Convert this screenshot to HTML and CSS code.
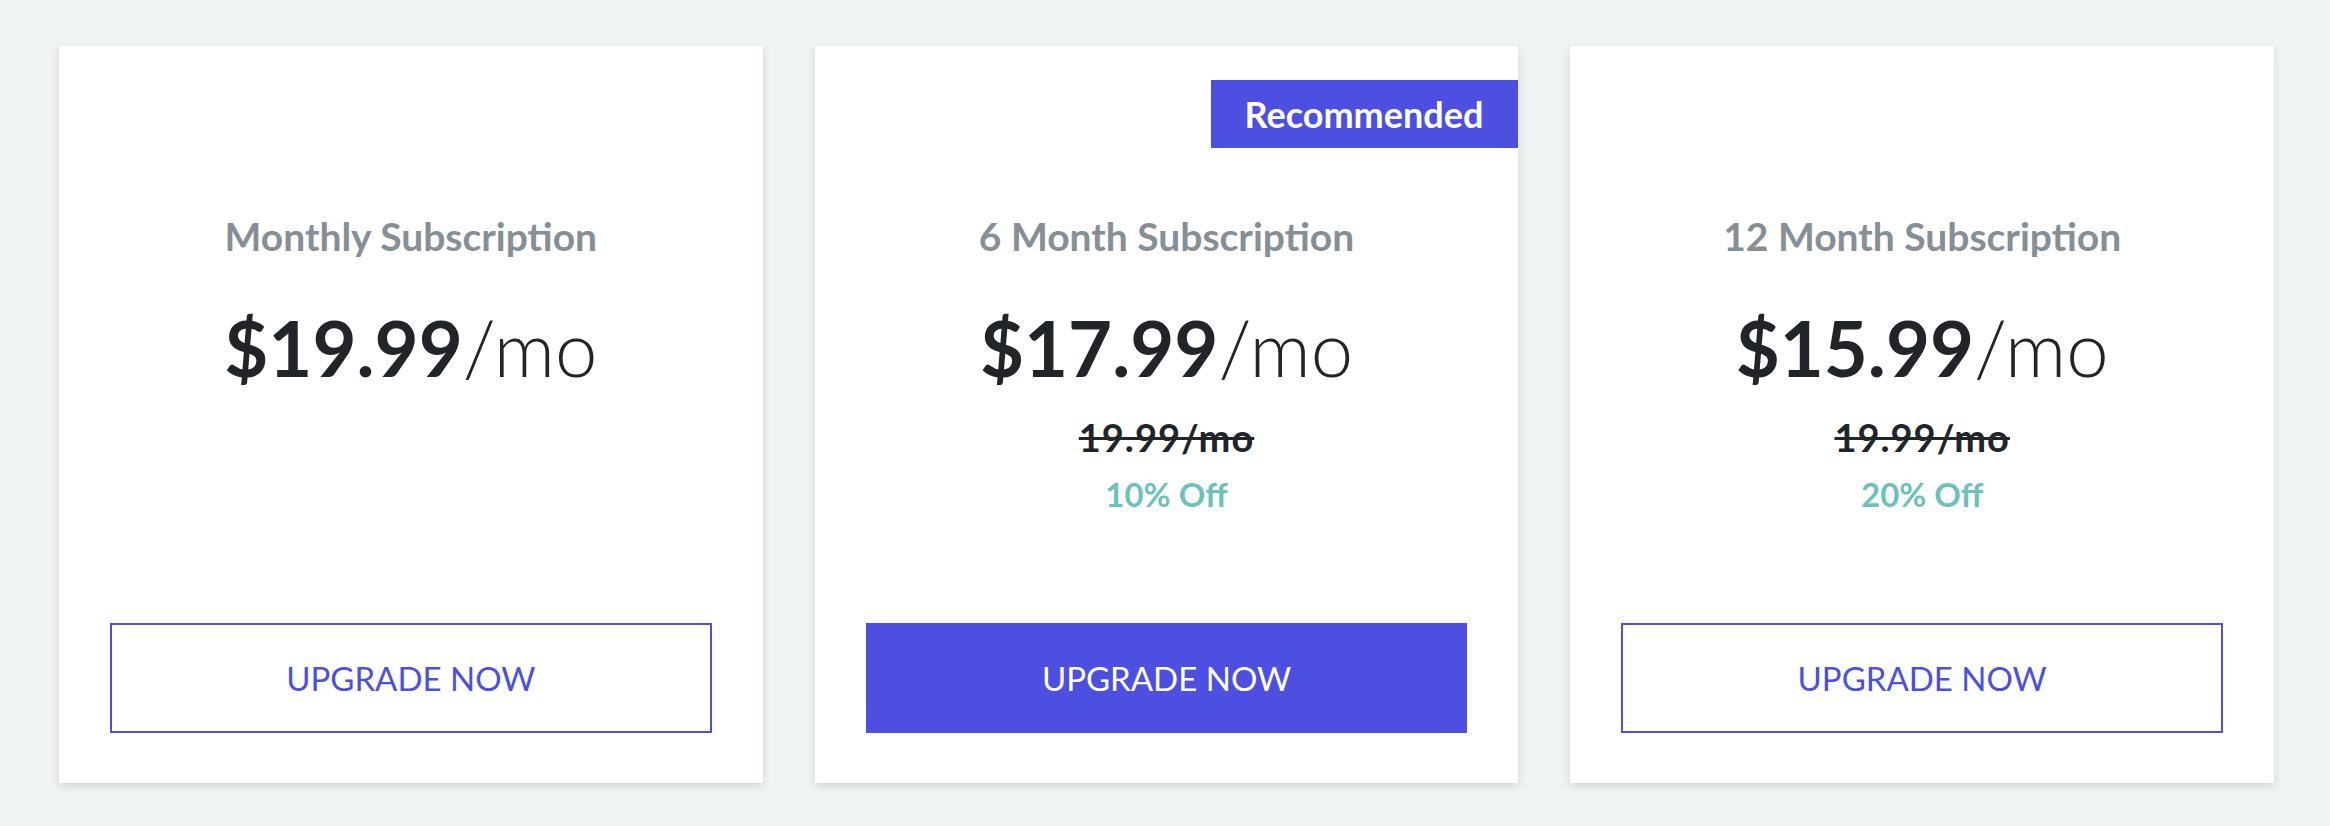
FILE: index.html
```html
<!DOCTYPE html>
<html lang="en">
<head>
    <meta charset="UTF-8">
    <meta name="viewport" content="width=device-width, initial-scale=1.0">
    <title>Upgrade</title>
    <link rel="stylesheet" href="styles.css">
</head>
<body>
    <div class="plans">
        <div class="plan">
            <h2 class="plan-title">Monthly Subscription</h2>
            <div class="plan-price"><strong>$19.99</strong>/mo</div>
            <button class="plan-btn">UPGRADE NOW</button>
        </div>

        <div class="plan">
            <span class="badge">Recommended</span>
            <h2 class="plan-title">6 Month Subscription</h2>
            <div class="plan-price"><strong>$17.99</strong>/mo</div>
            <div class="plan-old">19.99/mo</div>
            <div class="plan-off">10% Off</div>
            <button class="plan-btn plan-btn-solid">UPGRADE NOW</button>
        </div>

        <div class="plan">
            <h2 class="plan-title">12 Month Subscription</h2>
            <div class="plan-price"><strong>$15.99</strong>/mo</div>
            <div class="plan-old">19.99/mo</div>
            <div class="plan-off">20% Off</div>
            <button class="plan-btn">UPGRADE NOW</button>
        </div>
    </div>
</body>
</html>
```

FILE: styles.css
```css
body {
    margin: 0;
    background-color: #eff3f4;
    font-family: Lato, "Open Sans", sans-serif;
    color: #212529;
}
.plans {
    display: flex;
    gap: 52px;
    padding: 46px 56px 43px 59px;
}
.plan {
    position: relative;
    flex: 1;
    height: 737px;
    box-sizing: border-box;
    padding: 50px 51px;
    display: flex;
    flex-direction: column;
    text-align: center;
    background-color: #fff;
    box-shadow: 0 3px 8px rgba(0, 0, 0, 0.12);
}
.plan-title {
    margin: 117px 0 0;
    font-size: 39px;
    line-height: 1.2;
    font-weight: 700;
    color: #868e96;
}
.plan-price {
    margin-top: 42px;
    font-size: 76px;
    line-height: 1.2;
    font-weight: 300;
}
.plan-price strong {
    font-weight: 700;
}
.plan-old {
    margin-top: 22px;
    font-size: 38px;
    line-height: 1.2;
    font-weight: 700;
    letter-spacing: 1px;
    text-decoration: line-through;
}
.plan-off {
    margin-top: 14px;
    font-size: 33px;
    line-height: 1.2;
    font-weight: 700;
    color: #6cc2bb;
}
.plan-btn {
    margin-top: auto;
    height: 110px;
    border: 2px solid #4c4fdf;
    background-color: #fff;
    color: #4c4fdf;
    font-family: inherit;
    font-size: 33px;
    font-weight: 400;
    cursor: pointer;
}
.plan-btn-solid {
    background-color: #4c4fdf;
    color: #fff;
}
.badge {
    position: absolute;
    top: 34px;
    right: 0;
    height: 68px;
    padding: 0 35px 0 34px;
    line-height: 68px;
    font-size: 36px;
    font-weight: 700;
    color: #fff;
    background-color: #4c4fdf;
}
```
